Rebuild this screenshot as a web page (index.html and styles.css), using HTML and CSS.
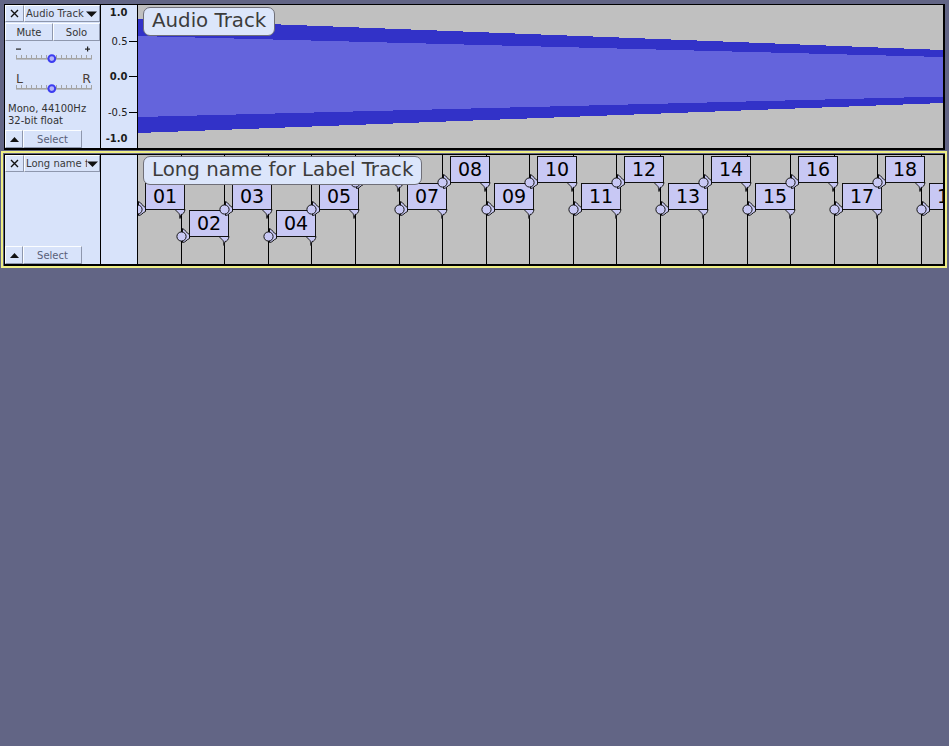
FILE: index.html
```html
<!DOCTYPE html>
<html>
<head>
<meta charset="utf-8">
<title>Tracks</title>
<link rel="stylesheet" href="styles.css">
</head>
<body>
<div class="tracks">
  <div class="wrap">
    <div class="track audio">
      <div class="panel">
        <div class="row top">
          <div class="btn close"><svg width="9" height="9" viewBox="0 0 9 9"><path d="M1 1L8 8M8 1L1 8"/></svg></div>
          <div class="btn title"><span class="tname">Audio Track</span><svg class="drop" width="11" height="6" viewBox="0 0 11 6"><path d="M0 0.5H11L5.5 6Z"/></svg></div>
        </div>
        <div class="row ms"><div class="btn mute">Mute</div><div class="btn solo">Solo</div></div>
        <svg class="slider gain" width="95" height="22" viewBox="0 0 95 22">
          <rect x="11" y="5.5" width="5" height="1.2" class="sym"/>
          <rect x="80" y="5.5" width="5" height="1.2" class="sym"/>
          <rect x="82" y="3.5" width="1.2" height="5" class="sym"/>
          <path class="ticks" d="M11.5 12v3M16.5 12v3M21.5 12v3M26.5 12v3M31.5 12v3M36.5 12v3M41.5 12v3M46.5 12v3M51.5 12v3M56.5 12v3M61.5 12v3M66.5 12v3M71.5 12v3M76.5 12v3M81.5 12v3M86.5 12v3"/>
          <rect x="11" y="15" width="76" height="1.6" class="line"/>
          <circle cx="46.8" cy="15.6" r="3.4" class="thumb"/>
        </svg>
        <div class="lr"><span>L</span><span>R</span></div>
        <svg class="slider pan" width="95" height="14" viewBox="0 0 95 14">
          <path class="ticks" d="M11.5 2v3M16.5 2v3M21.5 2v3M26.5 2v3M31.5 2v3M36.5 2v3M41.5 2v3M46.5 2v3M51.5 2v3M56.5 2v3M61.5 2v3M66.5 2v3M71.5 2v3M76.5 2v3M81.5 2v3M86.5 2v3"/>
          <rect x="11" y="5" width="76" height="1.6" class="line"/>
          <circle cx="46.8" cy="5.6" r="3.4" class="thumb"/>
        </svg>
        <div class="info">Mono, 44100Hz<br>32-bit float</div>
        <div class="row bottom">
          <div class="btn up"><svg width="9" height="5" viewBox="0 0 9 5"><path d="M0 5H9L4.5 0Z"/></svg></div>
          <div class="btn select">Select</div>
        </div>
      </div>
      <div class="ruler">
        <svg width="36" height="143" viewBox="0 0 36 143">
          <text x="26.5" y="10.5" class="b">1.0</text>
          <text x="26.5" y="40">0.5</text>
          <text x="26.5" y="75" class="b">0.0</text>
          <text x="26.5" y="111">-0.5</text>
          <text x="26.5" y="137" class="b">-1.0</text>
          <path class="rtick" d="M28 36.5H36M28 71.5H36M28 107.5H36"/>
        </svg>
      </div>
      <div class="canvas wave">
        <svg width="805" height="143" viewBox="0 0 805 143" shape-rendering="crispEdges">
          <rect width="805" height="143" fill="#c0c0c0"/>
          <polygon points="0,14 805,45 805,98 0,128" fill="#3232c8"/>
          <polygon points="0,31 805,52 805,91.5 0,112" fill="#6464dc"/>
        </svg>
        <div class="trackname audio-name">Audio Track</div>
      </div>
    </div>
  </div>

  <div class="wrap focus">
    <div class="track labels">
      <div class="panel">
        <div class="row top">
          <div class="btn close"><svg width="9" height="9" viewBox="0 0 9 9"><path d="M1 1L8 8M8 1L1 8"/></svg></div>
          <div class="btn title"><span class="tname clip">Long name for Label Track</span><svg class="drop" width="11" height="6" viewBox="0 0 11 6"><path d="M0 0.5H11L5.5 6Z"/></svg></div>
        </div>
        <div class="row bottom">
          <div class="btn up"><svg width="9" height="5" viewBox="0 0 9 5"><path d="M0 5H9L4.5 0Z"/></svg></div>
          <div class="btn select">Select</div>
        </div>
      </div>
      <div class="ruler"></div>
      <div class="canvas lbl">
        <svg width="805" height="109" viewBox="0 0 805 109">
          <defs>
            <g id="lg"><path d="M1 -8 C4 -7 5 -3 8 -2 L8 2 C5 3 4 6 1 6 Z"/><circle r="4.6"/></g>
            <g id="rg"><path d="M-10 0 C-8 2 -7 3 -6 4 C-5.5 5 -5.2 7 -5 9 L-4 5 C-2 5 -0.5 3 0 0 Z"/></g>
          </defs>
          <rect width="805" height="109" fill="#c0c0c0"/>
          <path class="vl" d="M43.5 0V109M86.5 0V109M130.5 0V109M173.5 0V109M217.5 0V109M261.5 0V109M304.5 0V109M348.5 0V109M391.5 0V109M435.5 0V109M478.5 0V109M522.5 0V109M565.5 0V109M609.5 0V109M652.5 0V109M696.5 0V109M739.5 0V109M783.5 0V109"/>
          <g class="lab" transform="translate(-1,28)"><rect x="8.5" y="0.5" width="39" height="26"/><text x="28" y="20.3">01</text><use href="#lg" x="0.5" y="26.5"/><use href="#rg" x="48" y="26.5"/></g>
          <g class="lab" transform="translate(43,55)"><rect x="8.5" y="0.5" width="39" height="26"/><text x="28" y="20.3">02</text><use href="#lg" x="0.5" y="26.5"/><use href="#rg" x="48" y="26.5"/></g>
          <g class="lab" transform="translate(86,28)"><rect x="8.5" y="0.5" width="39" height="26"/><text x="28" y="20.3">03</text><use href="#lg" x="0.5" y="26.5"/><use href="#rg" x="48" y="26.5"/></g>
          <g class="lab" transform="translate(130,55)"><rect x="8.5" y="0.5" width="39" height="26"/><text x="28" y="20.3">04</text><use href="#lg" x="0.5" y="26.5"/><use href="#rg" x="48" y="26.5"/></g>
          <g class="lab" transform="translate(173,28)"><rect x="8.5" y="0.5" width="39" height="26"/><text x="28" y="20.3">05</text><use href="#lg" x="0.5" y="26.5"/><use href="#rg" x="48" y="26.5"/></g>
          <g class="lab" transform="translate(217,1)"><rect x="8.5" y="0.5" width="39" height="26"/><use href="#lg" x="0.5" y="26.5"/><use href="#rg" x="48" y="26.5"/></g>
          <g class="lab" transform="translate(261,28)"><rect x="8.5" y="0.5" width="39" height="26"/><text x="28" y="20.3">07</text><use href="#lg" x="0.5" y="26.5"/><use href="#rg" x="48" y="26.5"/></g>
          <g class="lab" transform="translate(304,1)"><rect x="8.5" y="0.5" width="39" height="26"/><text x="28" y="20.3">08</text><use href="#lg" x="0.5" y="26.5"/><use href="#rg" x="48" y="26.5"/></g>
          <g class="lab" transform="translate(348,28)"><rect x="8.5" y="0.5" width="39" height="26"/><text x="28" y="20.3">09</text><use href="#lg" x="0.5" y="26.5"/><use href="#rg" x="48" y="26.5"/></g>
          <g class="lab" transform="translate(391,1)"><rect x="8.5" y="0.5" width="39" height="26"/><text x="28" y="20.3">10</text><use href="#lg" x="0.5" y="26.5"/><use href="#rg" x="48" y="26.5"/></g>
          <g class="lab" transform="translate(435,28)"><rect x="8.5" y="0.5" width="39" height="26"/><text x="28" y="20.3">11</text><use href="#lg" x="0.5" y="26.5"/><use href="#rg" x="48" y="26.5"/></g>
          <g class="lab" transform="translate(478,1)"><rect x="8.5" y="0.5" width="39" height="26"/><text x="28" y="20.3">12</text><use href="#lg" x="0.5" y="26.5"/><use href="#rg" x="48" y="26.5"/></g>
          <g class="lab" transform="translate(522,28)"><rect x="8.5" y="0.5" width="39" height="26"/><text x="28" y="20.3">13</text><use href="#lg" x="0.5" y="26.5"/><use href="#rg" x="48" y="26.5"/></g>
          <g class="lab" transform="translate(565,1)"><rect x="8.5" y="0.5" width="39" height="26"/><text x="28" y="20.3">14</text><use href="#lg" x="0.5" y="26.5"/><use href="#rg" x="48" y="26.5"/></g>
          <g class="lab" transform="translate(609,28)"><rect x="8.5" y="0.5" width="39" height="26"/><text x="28" y="20.3">15</text><use href="#lg" x="0.5" y="26.5"/><use href="#rg" x="48" y="26.5"/></g>
          <g class="lab" transform="translate(652,1)"><rect x="8.5" y="0.5" width="39" height="26"/><text x="28" y="20.3">16</text><use href="#lg" x="0.5" y="26.5"/><use href="#rg" x="48" y="26.5"/></g>
          <g class="lab" transform="translate(696,28)"><rect x="8.5" y="0.5" width="39" height="26"/><text x="28" y="20.3">17</text><use href="#lg" x="0.5" y="26.5"/><use href="#rg" x="48" y="26.5"/></g>
          <g class="lab" transform="translate(739,1)"><rect x="8.5" y="0.5" width="39" height="26"/><text x="28" y="20.3">18</text><use href="#lg" x="0.5" y="26.5"/><use href="#rg" x="48" y="26.5"/></g>
          <g class="lab" transform="translate(783,28)"><rect x="8.5" y="0.5" width="39" height="26"/><text x="28" y="20.3">19</text><use href="#lg" x="0.5" y="26.5"/><use href="#rg" x="48" y="26.5"/></g>
        </svg>
        <div class="trackname label-name">Long name for Label Track</div>
      </div>
    </div>
  </div>
</div>
</body>
</html>
```
FILE: styles.css
```css
* { box-sizing: border-box; }
html, body { margin: 0; padding: 0; }
body {
  background: #626585;
  width: 949px;
  height: 746px;
  overflow: hidden;
  font-family: "DejaVu Sans", "Liberation Sans", sans-serif;
}
svg { overflow: visible; display: block; }

.tracks { padding: 1px 0 0 1px; }

.wrap {
  width: 946px;
  border: 2px solid transparent;
  border-bottom-width: 1px;
  padding: 1px 0 0 1px;
}
.wrap.focus { border-color: #efef86; border-bottom-width: 2px; }

.track {
  display: flex;
  border-left: 1px solid #000;
  border-top: 1px solid #000;
  border-right: 2px solid #000;
  border-bottom: 2px solid #000;
  background: #d8e3fa;
}
.track.audio { height: 146px; }
.track.labels { height: 112px; }

.panel {
  width: 96px;
  border-right: 1px solid #000;
  display: flex;
  flex-direction: column;
}
.ruler {
  width: 37px;
  border-right: 1px solid #000;
}
.canvas {
  width: 805px;
  position: relative;
  overflow: hidden;
  background: #c0c0c0;
}

.row { display: flex; }
.row.top { height: 17px; }
.row.ms { height: 18px; margin-top: 1px; }
.row.bottom { height: 18px; margin-top: auto; }

.btn {
  border-top: 1px solid #fbfdff;
  border-left: 1px solid #fbfdff;
  border-right: 1px solid #8e97ad;
  border-bottom: 1px solid #8e97ad;
  background: #d8e3fa;
  display: flex;
  align-items: center;
  justify-content: center;
  font-size: 10px;
  color: #333;
  white-space: nowrap;
}
.btn.close { width: 19px; }
.btn.close path { stroke: #111; stroke-width: 1.4; fill: none; }
.btn.title { flex: 1; justify-content: flex-start; padding-left: 1px; overflow: hidden; }
.tname { flex: 1; overflow: hidden; color: #3a3a3a; }
.tname.clip { flex: 0 0 61px; }
.drop { flex: none; margin: 0 2px 0 0; }
.drop path, .btn.up path { fill: #111; }
.btn.mute { width: 48px; }
.btn.solo { flex: 1; }
.btn.up { width: 18px; }
.btn.select { width: 59px; color: #586078; }

.slider.gain { margin-top: 2px; }
.slider .sym { fill: #222; }
.slider .ticks { stroke: #a4a4a4; stroke-width: 1; fill: none; }
.slider .line { fill: #a4a4a4; }
.slider .thumb { fill: #b4b4f6; stroke: #3c3cf0; stroke-width: 2; }

.lr {
  display: flex;
  justify-content: space-between;
  margin: 8px 9px 0 11px;
  height: 12px;
  font-size: 12.5px;
  line-height: 12px;
  color: #4a3e38;
}
.slider.pan { margin-top: -2px; }

.info {
  margin: 6px 0 0 3px;
  font-size: 10px;
  line-height: 11.5px;
  color: #333;
}

.ruler text {
  font-family: "DejaVu Sans", sans-serif;
  font-size: 10px;
  text-anchor: end;
  fill: #1c1c1c;
}
.ruler text.b { font-weight: bold; }
.ruler .rtick { stroke: #000; stroke-width: 1; }

.trackname {
  position: absolute;
  left: 5px;
  height: 29px;
  border: 1.5px solid #6f6f78;
  border-radius: 7px;
  background: #dce6fb;
  padding: 0 8px 0 8px;
  font-size: 19.8px;
  line-height: 25px;
  color: #3c3c3c;
  white-space: nowrap;
}
.audio-name { top: 2px; }
.label-name { top: 1px; }

.lbl .vl { stroke: #000; stroke-width: 1; fill: none; }
.lab rect { fill: #c8c8f4; stroke: #111; stroke-width: 1; }
.lab text {
  font-family: "DejaVu Sans", sans-serif;
  font-size: 19px;
  text-anchor: middle;
  fill: #000;
}
.lab use { fill: #c8c8f4; stroke: #111; stroke-width: 1; }
```
